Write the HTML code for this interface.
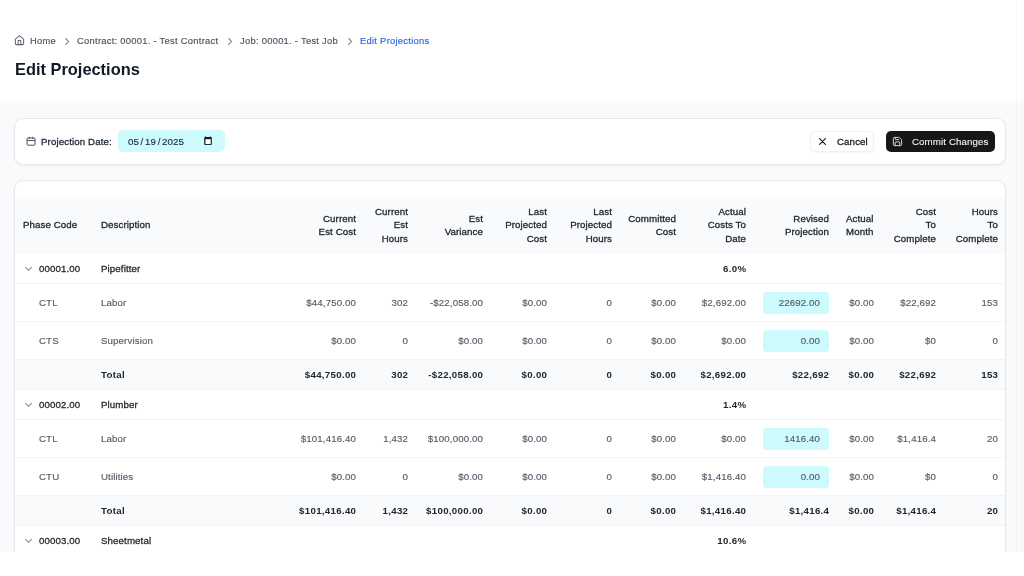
<!DOCTYPE html>
<html><head><meta charset="utf-8">
<style>
*{margin:0;padding:0;box-sizing:border-box}
html,body{width:1024px;height:576px;overflow:hidden;background:#fff;font-family:"Liberation Sans", sans-serif}
#app{will-change:transform;position:absolute;left:0;top:0;width:1024px;height:552px;background:#f8fafc;overflow:hidden}
#top{position:absolute;left:0;top:0;width:1024px;height:101px;background:#fff}
.bc{position:absolute;top:35px;height:12px;line-height:12px;font-size:9.4px;letter-spacing:0.27px;color:#4b5260;-webkit-text-stroke:0.15px #4b5260;white-space:nowrap}
.title{position:absolute;left:15px;top:59px;font-size:16.4px;font-weight:bold;color:#111827;white-space:nowrap;line-height:20px}
.card{position:absolute;background:#fff;border:1px solid #e6e7ea;border-radius:9px;box-shadow:0 1px 2px rgba(0,0,0,0.05)}
.c{position:absolute;white-space:nowrap;font-size:9.7px;letter-spacing:0.12px}
.hc{position:absolute;white-space:nowrap;font-size:9.7px;letter-spacing:0.1px;line-height:13.3px;color:#1f242c;-webkit-text-stroke:0.3px #1f242c}
.g{color:#1f232b;-webkit-text-stroke:0.28px #1f232b}
.d{color:#555d69;-webkit-text-stroke:0.15px #555d69}
.t{color:#22262e;font-weight:bold;letter-spacing:0.3px;margin-right:-0.3px}
.rowbg{position:absolute;left:15px;width:990px}
.tot{background:#f8fafc}
.rowline{position:absolute;left:15px;width:990px;height:1px;background:#f1f3f6}
.inp{position:absolute;left:763px;width:66px;height:22px;line-height:22px;border-radius:4px;background:#ccfafd;text-align:right;padding-right:9px;font-size:9.7px;letter-spacing:0.12px;color:#555d69;-webkit-text-stroke:0.15px #555d69}
.chev{position:absolute;left:24px;width:9px;height:6px} svg{display:block}
</style></head><body>
<div id="app">
 <div id="top">
  <svg style="position:absolute;left:13.8px;top:35px" width="11" height="11" viewBox="0 0 24 24" fill="none" stroke="#5f6671" stroke-width="2.2" stroke-linecap="round" stroke-linejoin="round"><path d="M15 21v-8a1 1 0 0 0-1-1h-4a1 1 0 0 0-1 1v8"/><path d="M3 10a2 2 0 0 1 .709-1.528l7-5.999a2 2 0 0 1 2.582 0l7 5.999A2 2 0 0 1 21 10v9a2 2 0 0 1-2 2H5a2 2 0 0 1-2-2z"/></svg>
  <div class="bc" style="left:30px">Home</div>
  <svg style="position:absolute;left:63.5px;top:37px" width="6" height="9" viewBox="0 0 6 9"><path d="M1.8 1.6 L4.6 4.5 L1.8 7.4" fill="none" stroke="#6b7280" stroke-width="1.05" stroke-linecap="round" stroke-linejoin="round"/></svg>
  <div class="bc" style="left:77px">Contract: 00001. - Test Contract</div>
  <svg style="position:absolute;left:227px;top:37px" width="6" height="9" viewBox="0 0 6 9"><path d="M1.8 1.6 L4.6 4.5 L1.8 7.4" fill="none" stroke="#6b7280" stroke-width="1.05" stroke-linecap="round" stroke-linejoin="round"/></svg>
  <div class="bc" style="left:240px">Job: 00001. - Test Job</div>
  <svg style="position:absolute;left:346.5px;top:37px" width="6" height="9" viewBox="0 0 6 9"><path d="M1.8 1.6 L4.6 4.5 L1.8 7.4" fill="none" stroke="#6b7280" stroke-width="1.05" stroke-linecap="round" stroke-linejoin="round"/></svg>
  <div class="bc" style="left:360px;color:#2563eb;-webkit-text-stroke:0.15px #2563eb">Edit Projections</div>
  <div class="title">Edit Projections</div>
 </div>
 <div class="card" style="left:14px;top:118px;width:992px;height:47px">
 </div>
 <svg style="position:absolute;left:26px;top:136px" width="10" height="10" viewBox="0 0 10 10"><rect x="1" y="2" width="8" height="7.2" rx="1" fill="none" stroke="#4b5563" stroke-width="1"/><path d="M1 4.5 H9 M3.3 0.8 V3 M6.7 0.8 V3" stroke="#4b5563" stroke-width="1"/></svg>
 <div class="c" style="left:41px;top:130px;height:23px;line-height:23px;-webkit-text-stroke:0.3px #1f2937;color:#1f2937">Projection Date:</div>
 <div style="position:absolute;left:118px;top:130px;width:107px;height:22px;border-radius:5px;background:#ccfafd"></div>
 <div class="c" style="left:128px;top:130.5px;height:22px;line-height:22px;color:#1f2937;-webkit-text-stroke:0.15px #1f2937">05<span style="margin:0 1.6px">/</span>19<span style="margin:0 1.6px">/</span>2025</div>
 <svg style="position:absolute;left:204px;top:136px" width="8" height="9" viewBox="0 0 8 9"><rect x="0.2" y="1" width="7.6" height="8" rx="1" fill="#1a1a1a"/><rect x="1.5" y="3.2" width="5.2" height="4.9" fill="#fff"/><rect x="1.1" y="0.2" width="1" height="1.2" fill="#555"/><rect x="5.9" y="0.2" width="1" height="1.2" fill="#555"/></svg>
 <div style="position:absolute;left:810px;top:131px;width:64px;height:21px;border-radius:5px;background:#fff;border:1px solid #eef0f3;box-shadow:0 1px 2px rgba(0,0,0,0.04)"></div>
 <svg style="position:absolute;left:818.5px;top:137.6px" width="7" height="7" viewBox="0 0 7 7"><path d="M0.6 0.6 L6.4 6.4 M6.4 0.6 L0.6 6.4" stroke="#1c1d21" stroke-width="1.15" stroke-linecap="round"/></svg>
 <div class="c" style="left:837px;top:131px;height:21px;line-height:21px;color:#1c1d21;-webkit-text-stroke:0.3px #1c1d21">Cancel</div>
 <div style="position:absolute;left:886px;top:131px;width:109px;height:21px;border-radius:5px;background:#171717"></div>
 <svg style="position:absolute;left:891.9px;top:135.6px" width="11" height="11" viewBox="0 0 24 24" fill="none" stroke="#d8d8d8" stroke-width="2.1" stroke-linecap="round" stroke-linejoin="round"><path d="M15.2 3a2 2 0 0 1 1.4.6l3.8 3.8a2 2 0 0 1 .6 1.4V19a2 2 0 0 1-2 2H5a2 2 0 0 1-2-2V5a2 2 0 0 1 2-2z"/><path d="M17 21v-7a1 1 0 0 0-1-1H8a1 1 0 0 0-1 1v7"/><path d="M7 3v4a1 1 0 0 0 1 1h7"/></svg>
 <div class="c" style="left:912px;top:131px;height:21px;line-height:21px;color:#f5f5f5;-webkit-text-stroke:0.1px #f5f5f5">Commit Changes</div>
 <div class="card" style="left:14px;top:180px;width:992px;height:400px;overflow:hidden">
 </div>
 <div style="position:absolute;left:15px;top:197px;width:990px;height:57px;background:#f8fafc"></div>
 <div class="hc" style="left:23px;top:218.3px;text-align:left">Phase Code</div><div class="hc" style="left:101px;top:218.3px;text-align:left">Description</div><div class="hc" style="right:668px;top:211.7px;text-align:right">Current<br>Est Cost</div><div class="hc" style="right:616px;top:205.1px;text-align:right">Current<br>Est<br>Hours</div><div class="hc" style="right:541px;top:211.7px;text-align:right">Est<br>Variance</div><div class="hc" style="right:477px;top:205.1px;text-align:right">Last<br>Projected<br>Cost</div><div class="hc" style="right:412px;top:205.1px;text-align:right">Last<br>Projected<br>Hours</div><div class="hc" style="right:348px;top:211.7px;text-align:right">Committed<br>Cost</div><div class="hc" style="right:278px;top:205.1px;text-align:right">Actual<br>Costs To<br>Date</div><div class="hc" style="right:195px;top:211.7px;text-align:right">Revised<br>Projection</div><div class="hc" style="left:846px;top:211.7px;text-align:left">Actual<br>Month</div><div class="hc" style="right:88px;top:205.1px;text-align:right">Cost<br>To<br>Complete</div><div class="hc" style="right:26px;top:205.1px;text-align:right">Hours<br>To<br>Complete</div>
 <div class="rowline" style="top:283px"></div><div class="chev" style="top:266.0px"><svg width="9" height="6" viewBox="0 0 9 6"><path d="M1.6 1.5 L4.5 4.3 L7.4 1.5" fill="none" stroke="#9aa0a8" stroke-width="1.2" stroke-linecap="round" stroke-linejoin="round"/></svg></div><div class="c g" style="left:39px;top:254px;height:30px;line-height:30px">00001.00</div><div class="c g" style="left:101px;top:254px;height:30px;line-height:30px">Pipefitter</div><div class="c t" style="right:278px;top:254px;height:30px;line-height:30px">6.0%</div><div class="rowline" style="top:321px"></div><div class="c d" style="left:39px;top:284px;height:38px;line-height:38px">CTL</div><div class="c d" style="left:101px;top:284px;height:38px;line-height:38px">Labor</div><div class="c d" style="right:668px;top:284px;height:38px;line-height:38px">$44,750.00</div><div class="c d" style="right:616px;top:284px;height:38px;line-height:38px">302</div><div class="c d" style="right:541px;top:284px;height:38px;line-height:38px">-$22,058.00</div><div class="c d" style="right:477px;top:284px;height:38px;line-height:38px">$0.00</div><div class="c d" style="right:412px;top:284px;height:38px;line-height:38px">0</div><div class="c d" style="right:348px;top:284px;height:38px;line-height:38px">$0.00</div><div class="c d" style="right:278px;top:284px;height:38px;line-height:38px">$2,692.00</div><div class="inp" style="top:292px">22692.00</div><div class="c d" style="right:150px;top:284px;height:38px;line-height:38px">$0.00</div><div class="c d" style="right:88px;top:284px;height:38px;line-height:38px">$22,692</div><div class="c d" style="right:26px;top:284px;height:38px;line-height:38px">153</div><div class="rowline" style="top:359px"></div><div class="c d" style="left:39px;top:322px;height:38px;line-height:38px">CTS</div><div class="c d" style="left:101px;top:322px;height:38px;line-height:38px">Supervision</div><div class="c d" style="right:668px;top:322px;height:38px;line-height:38px">$0.00</div><div class="c d" style="right:616px;top:322px;height:38px;line-height:38px">0</div><div class="c d" style="right:541px;top:322px;height:38px;line-height:38px">$0.00</div><div class="c d" style="right:477px;top:322px;height:38px;line-height:38px">$0.00</div><div class="c d" style="right:412px;top:322px;height:38px;line-height:38px">0</div><div class="c d" style="right:348px;top:322px;height:38px;line-height:38px">$0.00</div><div class="c d" style="right:278px;top:322px;height:38px;line-height:38px">$0.00</div><div class="inp" style="top:330px">0.00</div><div class="c d" style="right:150px;top:322px;height:38px;line-height:38px">$0.00</div><div class="c d" style="right:88px;top:322px;height:38px;line-height:38px">$0</div><div class="c d" style="right:26px;top:322px;height:38px;line-height:38px">0</div><div class="rowbg tot" style="top:360px;height:30px"></div><div class="rowline" style="top:389px"></div><div class="c t" style="left:101px;top:360px;height:30px;line-height:30px">Total</div><div class="c t" style="right:668px;top:360px;height:30px;line-height:30px">$44,750.00</div><div class="c t" style="right:616px;top:360px;height:30px;line-height:30px">302</div><div class="c t" style="right:541px;top:360px;height:30px;line-height:30px">-$22,058.00</div><div class="c t" style="right:477px;top:360px;height:30px;line-height:30px">$0.00</div><div class="c t" style="right:412px;top:360px;height:30px;line-height:30px">0</div><div class="c t" style="right:348px;top:360px;height:30px;line-height:30px">$0.00</div><div class="c t" style="right:278px;top:360px;height:30px;line-height:30px">$2,692.00</div><div class="c t" style="right:195px;top:360px;height:30px;line-height:30px">$22,692</div><div class="c t" style="right:150px;top:360px;height:30px;line-height:30px">$0.00</div><div class="c t" style="right:88px;top:360px;height:30px;line-height:30px">$22,692</div><div class="c t" style="right:26px;top:360px;height:30px;line-height:30px">153</div><div class="rowline" style="top:419px"></div><div class="chev" style="top:402.0px"><svg width="9" height="6" viewBox="0 0 9 6"><path d="M1.6 1.5 L4.5 4.3 L7.4 1.5" fill="none" stroke="#9aa0a8" stroke-width="1.2" stroke-linecap="round" stroke-linejoin="round"/></svg></div><div class="c g" style="left:39px;top:390px;height:30px;line-height:30px">00002.00</div><div class="c g" style="left:101px;top:390px;height:30px;line-height:30px">Plumber</div><div class="c t" style="right:278px;top:390px;height:30px;line-height:30px">1.4%</div><div class="rowline" style="top:457px"></div><div class="c d" style="left:39px;top:420px;height:38px;line-height:38px">CTL</div><div class="c d" style="left:101px;top:420px;height:38px;line-height:38px">Labor</div><div class="c d" style="right:668px;top:420px;height:38px;line-height:38px">$101,416.40</div><div class="c d" style="right:616px;top:420px;height:38px;line-height:38px">1,432</div><div class="c d" style="right:541px;top:420px;height:38px;line-height:38px">$100,000.00</div><div class="c d" style="right:477px;top:420px;height:38px;line-height:38px">$0.00</div><div class="c d" style="right:412px;top:420px;height:38px;line-height:38px">0</div><div class="c d" style="right:348px;top:420px;height:38px;line-height:38px">$0.00</div><div class="c d" style="right:278px;top:420px;height:38px;line-height:38px">$0.00</div><div class="inp" style="top:428px">1416.40</div><div class="c d" style="right:150px;top:420px;height:38px;line-height:38px">$0.00</div><div class="c d" style="right:88px;top:420px;height:38px;line-height:38px">$1,416.4</div><div class="c d" style="right:26px;top:420px;height:38px;line-height:38px">20</div><div class="rowline" style="top:495px"></div><div class="c d" style="left:39px;top:458px;height:38px;line-height:38px">CTU</div><div class="c d" style="left:101px;top:458px;height:38px;line-height:38px">Utilities</div><div class="c d" style="right:668px;top:458px;height:38px;line-height:38px">$0.00</div><div class="c d" style="right:616px;top:458px;height:38px;line-height:38px">0</div><div class="c d" style="right:541px;top:458px;height:38px;line-height:38px">$0.00</div><div class="c d" style="right:477px;top:458px;height:38px;line-height:38px">$0.00</div><div class="c d" style="right:412px;top:458px;height:38px;line-height:38px">0</div><div class="c d" style="right:348px;top:458px;height:38px;line-height:38px">$0.00</div><div class="c d" style="right:278px;top:458px;height:38px;line-height:38px">$1,416.40</div><div class="inp" style="top:466px">0.00</div><div class="c d" style="right:150px;top:458px;height:38px;line-height:38px">$0.00</div><div class="c d" style="right:88px;top:458px;height:38px;line-height:38px">$0</div><div class="c d" style="right:26px;top:458px;height:38px;line-height:38px">0</div><div class="rowbg tot" style="top:496px;height:30px"></div><div class="rowline" style="top:525px"></div><div class="c t" style="left:101px;top:496px;height:30px;line-height:30px">Total</div><div class="c t" style="right:668px;top:496px;height:30px;line-height:30px">$101,416.40</div><div class="c t" style="right:616px;top:496px;height:30px;line-height:30px">1,432</div><div class="c t" style="right:541px;top:496px;height:30px;line-height:30px">$100,000.00</div><div class="c t" style="right:477px;top:496px;height:30px;line-height:30px">$0.00</div><div class="c t" style="right:412px;top:496px;height:30px;line-height:30px">0</div><div class="c t" style="right:348px;top:496px;height:30px;line-height:30px">$0.00</div><div class="c t" style="right:278px;top:496px;height:30px;line-height:30px">$1,416.40</div><div class="c t" style="right:195px;top:496px;height:30px;line-height:30px">$1,416.4</div><div class="c t" style="right:150px;top:496px;height:30px;line-height:30px">$0.00</div><div class="c t" style="right:88px;top:496px;height:30px;line-height:30px">$1,416.4</div><div class="c t" style="right:26px;top:496px;height:30px;line-height:30px">20</div><div class="rowline" style="top:555px"></div><div class="chev" style="top:538.0px"><svg width="9" height="6" viewBox="0 0 9 6"><path d="M1.6 1.5 L4.5 4.3 L7.4 1.5" fill="none" stroke="#9aa0a8" stroke-width="1.2" stroke-linecap="round" stroke-linejoin="round"/></svg></div><div class="c g" style="left:39px;top:526px;height:30px;line-height:30px">00003.00</div><div class="c g" style="left:101px;top:526px;height:30px;line-height:30px">Sheetmetal</div><div class="c t" style="right:278px;top:526px;height:30px;line-height:30px">10.6%</div>
 <div style="position:absolute;left:1016px;top:0;width:1px;height:552px;background:rgba(0,0,0,0.025)"></div>
 <div style="position:absolute;left:1022px;top:0;width:1px;height:552px;background:rgba(0,0,0,0.02)"></div>
</div>
</body></html>
